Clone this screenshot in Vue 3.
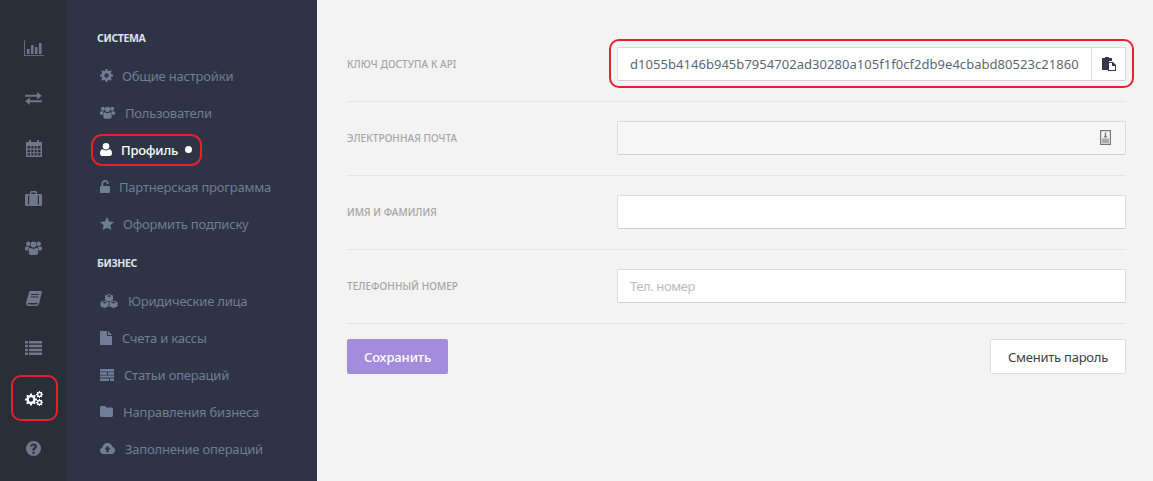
<script setup>
const railIcons = [
  { id: 'chart', w: 20, h: 16, active: false },
  { id: 'swap', w: 17, h: 13, active: false },
  { id: 'cal', w: 16, h: 17, active: false },
  { id: 'case', w: 17, h: 15, active: false },
  { id: 'users', w: 17, h: 14, active: false },
  { id: 'book', w: 16, h: 15, active: false },
  { id: 'list', w: 17, h: 14, active: false },
  { id: 'gears', w: 18, h: 15, active: true },
  { id: 'help', w: 15, h: 15, active: false },
]
const system = [
  { id: 'gear', label: 'Общие настройки', w: 13, h: 13, gap: 9 },
  { id: 'users', label: 'Пользователи', w: 15, h: 13, gap: 10 },
  { id: 'user', label: 'Профиль', w: 12, h: 13, gap: 9, active: true },
  { id: 'lock', label: 'Партнерская программа', w: 10, h: 13, gap: 9 },
  { id: 'star', label: 'Оформить подписку', w: 14, h: 13, gap: 9 },
]
const business = [
  { id: 'cubes', label: 'Юридические лица', w: 18, h: 14, gap: 10 },
  { id: 'file', label: 'Счета и кассы', w: 12, h: 14, gap: 10 },
  { id: 'lines', label: 'Статьи операций', w: 14, h: 12, gap: 10 },
  { id: 'folder', label: 'Направления бизнеса', w: 13, h: 11, gap: 10 },
  { id: 'cloud', label: 'Заполнение операций', w: 15, h: 11, gap: 10 },
]
const gearPath = (cx, cy, r, hole) => {
  const teeth = 8
  let d = ''
  for (let i = 0; i < teeth; i++) {
    const a = (i / teeth) * Math.PI * 2
    const s = Math.PI / teeth * 0.5
    const pts = [
      [r * 0.76, a - s * 1.25], [r, a - s * 0.75], [r, a + s * 0.75], [r * 0.76, a + s * 1.25],
    ]
    pts.forEach(([q, t], j) => {
      d += (i === 0 && j === 0 ? 'M' : 'L') + (cx + q * Math.cos(t)).toFixed(2) + ' ' + (cy + q * Math.sin(t)).toFixed(2)
    })
  }
  d += `Z M${cx - hole} ${cy}a${hole} ${hole} 0 1 0 ${hole * 2} 0a${hole} ${hole} 0 1 0 ${-hole * 2} 0Z`
  return d
}
const gears = {
  gear: gearPath(6.5, 6.5, 6.5, 2.2),
  big: gearPath(6, 8.5, 6, 2.2),
  s1: gearPath(14.5, 3.5, 3.5, 1.2),
  s2: gearPath(14.5, 11.5, 3.5, 1.2),
}
</script>

<template>
  <div class="app">
    <svg width="0" height="0" class="defs">
      <defs>
        <symbol id="chart" viewBox="0 0 20 16"><path d="M0 0h.8v15.200H20v.8H0z"/><path d="M3 9h2.500v5H3zM7 5h2.500v9H7zM11 7h2.500v7H11zM15 3h2.500v11H15z"/></symbol>
        <symbol id="swap" viewBox="0 0 18 14"><path d="M0 3h13V0l5 4-5 4V5H0z"/><path d="M18 9H5V6l-5 4 5 4v-3h13z"/></symbol>
        <symbol id="cal" viewBox="0 0 16 17"><path fill-rule="evenodd" d="M3 0h2v2h6V0h2v2h3v15H0V2h3zM1.500 6v2.500h2.700V6zm3.800 0v2.500h2.100V6zm3.300 0v2.500h2.100V6zm3.200 0v2.500h2.700V6zM1.500 9.700v2.500h2.700V9.700zm3.800 0v2.500h2.100V9.700zm3.300 0v2.500h2.100V9.700zm3.200 0v2.500h2.700V9.700zM1.500 13.300v2.200h2.700v-2.200zm3.800 0v2.200h2.100v-2.200zm3.300 0v2.200h2.100v-2.200zm3.200 0v2.200h2.700v-2.200z"/></symbol>
        <symbol id="case" viewBox="0 0 17 15"><path fill-rule="evenodd" d="M5 3V1.500C5 .7 5.700 0 6.500 0h4c.8 0 1.500.7 1.500 1.500V3h3.500c.8 0 1.500.7 1.500 1.500v9c0 .8-.7 1.500-1.500 1.500h-14C.7 15 0 14.300 0 13.500v-9C0 3.700.7 3 1.500 3zm1.500 0h4V1.500h-4zM3 4.500v9h1.200v-9zm9.800 0v9H14v-9z"/></symbol>
        <symbol id="users" viewBox="0 0 17 14"><circle cx="3.200" cy="2.800" r="2.200"/><circle cx="13.800" cy="2.800" r="2.200"/><circle cx="8.500" cy="3.400" r="3"/><path d="M0 6.500C0 5.800 1 5.500 2.500 5.500c.8 0 1.500.2 1.800.6-.6.900-.9 2-.9 3.400H1C.3 9.500 0 9 0 8.300zM17 6.500c0-.7-1-1-2.500-1-.8 0-1.500.2-1.800.6.600.9.900 2 .9 3.400H16c.7 0 1-.5 1-1.200z"/><path d="M5.500 6.800c.8.600 1.800 1 3 1s2.200-.4 3-1c1.100 0 1.700.9 1.700 3v2c0 1.300-.8 2.200-2 2.200H5.800c-1.200 0-2-.9-2-2.200v-2c0-2.100.6-3 1.700-3z"/></symbol>
        <symbol id="book" viewBox="0 0 16 15"><path fill-rule="evenodd" d="M3.500 0H15c.8 0 1 .6.8 1.300l-2.600 11c-.3 1.200-1.100 2.700-2.700 2.700H2.300C1 15 0 14 0 12.500c0-.5 0-1 .2-1.500zM5 3v1h8V3zM4.500 5.500v1h8v-1zM2 12.500c0 .7.500 1 1 1h7.500c.6 0 1.100-.4 1.300-1l.1-.5H3c-.6 0-1 0-1 .5z"/></symbol>
        <symbol id="list" viewBox="0 0 17 14"><path d="M0 0h3v2.500H0zM4 0h13v2.500H4zM0 3.800h3v2.500H0zM4 3.800h13v2.500H4zM0 7.700h3v2.500H0zM4 7.700h13v2.500H4zM0 11.500h3V14H0zM4 11.500h13V14H4z"/></symbol>
        <symbol id="gears" viewBox="0 0 18 15"><path fill-rule="evenodd" :d="gears.big"/><path fill-rule="evenodd" :d="gears.s1"/><path fill-rule="evenodd" :d="gears.s2"/></symbol>
        <symbol id="help" viewBox="0 0 15 15"><path fill-rule="evenodd" d="M7.500 0a7.500 7.500 0 1 1 0 15 7.500 7.500 0 0 1 0-15zM6.400 10.800v2h2.200v-2zM7.600 2.600C5.800 2.600 4.600 3.600 4.300 5.200l1.900.5c.2-.8.600-1.200 1.300-1.200.7 0 1.100.4 1.100.9 0 .5-.4.8-1 1.200-.8.500-1.200 1.200-1.200 2.200v.8h2.200v-.5c0-.5.200-.7.800-1.100.8-.6 1.500-1.300 1.500-2.600 0-1.700-1.300-2.800-3.300-2.800z"/></symbol>
        <symbol id="gear" viewBox="0 0 13 13"><path fill-rule="evenodd" :d="gears.gear"/></symbol>
        <symbol id="user" viewBox="0 0 12 13"><circle cx="6" cy="3.300" r="3.300"/><path d="M2.600 6.300C3.500 7 4.700 7.500 6 7.500s2.500-.5 3.400-1.200C11 6.400 12 8 12 10.500c0 1.500-.9 2.500-2.200 2.500H2.200C.9 13 0 12 0 10.500 0 8 1 6.400 2.600 6.300z"/></symbol>
        <symbol id="lock" viewBox="0 0 10 13"><path d="M0 6h1.500V3.500C1.500 1.500 3 0 5 0s3.500 1.500 3.500 3.500V4H6.800v-.5C6.800 2.500 6 1.800 5 1.800S3.200 2.500 3.200 3.500V6H9c.6 0 1 .4 1 1v5c0 .6-.4 1-1 1H1c-.6 0-1-.4-1-1V7c0-.6.400-1 1-1z"/></symbol>
        <symbol id="star" viewBox="0 0 14 13"><path d="M7 0l2.100 4.400 4.900.6-3.600 3.300.9 4.700L7 10.700 2.700 13l.9-4.700L0 5l4.900-.6z"/></symbol>
        <symbol id="cubes" viewBox="0 0 18 14"><path fill-rule="evenodd" d="M9 0l4 1.500V6l-4 1.500L5 6V1.500zM6.500 2l2.500.9 2.500-.9L9 1.100zM4.500 6.500l4 1.500v4.500L4.500 14 .5 12.500V8zM13.500 6.500l4 1.500v4.500l-4 1.500-4-1.500V8zM2 8.500l2.500.9L7 8.500l-2.500-.9zM11 8.500l2.500.9 2.500-.9-2.500-.9z"/></symbol>
        <symbol id="file" viewBox="0 0 12 14"><path d="M0 0h7v5h5v9H0zM8 0l4 4H8z"/></symbol>
        <symbol id="lines" viewBox="0 0 14 12"><path d="M0 0h14v2.500H0zM0 3.300h7v2.500H0zM8 3.300h6v2.500H8zM0 6.600h14v2H0zM0 9.500h9V12H0zM10 9.500h4V12h-4z"/></symbol>
        <symbol id="folder" viewBox="0 0 13 11"><path d="M1.500 0h3C5.300 0 6 .7 6 1.500h5.500c.8 0 1.500.7 1.500 1.500v6.500c0 .8-.7 1.500-1.500 1.500h-10C.7 11 0 10.300 0 9.500v-8C0 .7.700 0 1.500 0z"/></symbol>
        <symbol id="cloud" viewBox="0 0 15 11"><path fill-rule="evenodd" d="M3.500 11C1.500 11 0 9.600 0 7.700c0-1.500 1-2.800 2.400-3.100C2.700 2 4.900 0 7.500 0c2.300 0 4.300 1.500 4.900 3.700 1.600.3 2.600 1.800 2.600 3.500 0 2.100-1.600 3.800-3.500 3.800zM7.500 3L4.300 6.200h2v3h2.400v-3h2z"/></symbol>
      </defs>
    </svg>

    <nav class="rail">
      <div v-for="icon in railIcons" :key="icon.id" class="rail-item" :class="{ 'rail-active': icon.active }">
        <svg :width="icon.w" :height="icon.h" class="icon"><use :href="'#' + icon.id" /></svg>
      </div>
    </nav>

    <aside class="side">
      <h4 class="side-title">СИСТЕМА</h4>
      <a v-for="item in system" :key="item.id" class="side-item" :class="{ on: item.active }">
        <svg :width="item.w" :height="item.h" :style="{ marginRight: item.gap + 'px' }" class="icon"><use :href="'#' + item.id" /></svg>
        <span>{{ item.label }}</span>
        <i v-if="item.active" class="dot"></i>
      </a>
      <h4 class="side-title second">БИЗНЕС</h4>
      <a v-for="item in business" :key="item.id" class="side-item">
        <svg :width="item.w" :height="item.h" :style="{ marginRight: item.gap + 'px' }" class="icon"><use :href="'#' + item.id" /></svg>
        <span>{{ item.label }}</span>
      </a>
    </aside>

    <main class="main">
      <div class="row">
        <label class="lbl">КЛЮЧ ДОСТУПА К API</label>
        <div class="field key">
          <span class="key-text">d1055b4146b945b7954702ad30280a105f1f0cf2db9e4cbabd80523c21860</span>
          <button class="copy" type="button">
            <svg width="14" height="14" viewBox="0 0 14 14"><path d="M0 1h3V0h4v1h3v3H7v9H0z" fill="#3a3646"/><path fill-rule="evenodd" d="M6 5h5l3 3v6H6zm1 1v7h6V9h-3V6z" fill="#3a3646"/></svg>
          </button>
        </div>
      </div>
      <div class="row">
        <label class="lbl">ЭЛЕКТРОННАЯ ПОЧТА</label>
        <div class="field disabled">
          <svg width="11" height="15" viewBox="0 0 11 15"><path fill-rule="evenodd" d="M0 0h11v15H0zm1.200 1.200v12.600h8.600V1.200z" fill="#777"/><path d="M4.800 2.500h1.400v3l1.300 2H3.500l1.300-2z" fill="#777"/><path d="M2 8.500h7v4.500H2z" fill="#aaa"/></svg>
        </div>
      </div>
      <div class="row">
        <label class="lbl">ИМЯ И ФАМИЛИЯ</label>
        <div class="field"></div>
      </div>
      <div class="row">
        <label class="lbl">ТЕЛЕФОННЫЙ НОМЕР</label>
        <div class="field"><span class="ph">Тел. номер</span></div>
      </div>
      <div class="actions">
        <button class="save" type="button">Сохранить</button>
        <button class="change" type="button">Сменить пароль</button>
      </div>
    </main>
  </div>
</template>

<style scoped>
.app {
  display: flex;
  width: 1153px;
  height: 481px;
  overflow: hidden;
  font-family: "Noto Sans", "Liberation Sans", sans-serif;
}
.defs { position: absolute; }
.icon { fill: currentColor; flex: none; display: block; }
.rail {
  width: 67px;
  flex: none;
  background: #2a2e39;
  color: #6f7889;
  padding: 23px 0 0;
  box-sizing: border-box;
}
.rail-item {
  height: 50px;
  display: flex;
  align-items: center;
  justify-content: center;
  position: relative;
  box-sizing: border-box;
}
.rail-active { color: #fff; }
.rail-active::after {
  content: "";
  position: absolute;
  left: 11px;
  top: 2px;
  width: 47px;
  height: 46px;
  box-sizing: border-box;
  border: 2px solid #e8202e;
  border-radius: 10px;
}
.side {
  width: 250px;
  flex: none;
  background: #2e3446;
  padding: 32px 0 0 30px;
  box-sizing: border-box;
  color: #6f7d96;
}
.side-title {
  margin: 0 0 15px;
  font-size: 10.500px;
  line-height: 12px;
  font-weight: 700;
  color: #dfe1e6;
  letter-spacing: -0.35px;
}
.side-title.second { margin: 15px 0 13px; }
.side-item {
  display: flex;
  align-items: center;
  height: 37px;
  font-size: 13px;
  position: relative;
  letter-spacing: -0.2px;
  margin-left: 3px;
}
.side-item:first-of-type { margin-top: -2px; }
.side-item.on { color: #fff; font-weight: 500; letter-spacing: -0.25px; }
.side-item.on::after {
  content: "";
  position: absolute;
  left: -9px;
  top: 3px;
  width: 111px;
  height: 32px;
  box-sizing: border-box;
  border: 2px solid #e8202e;
  border-radius: 11px;
}
.dot {
  width: 7px;
  height: 7px;
  border-radius: 50%;
  background: #fff;
  margin-left: 7px;
}
.main {
  flex: 1;
  min-width: 0;
  background: #f3f3f3;
  padding: 28px 27px 0 30px;
  box-sizing: border-box;
}
.row {
  display: flex;
  align-items: center;
  height: 74px;
  border-bottom: 1px solid #e4e4e4;
  box-sizing: border-box;
}
.lbl {
  width: 270px;
  flex: none;
  font-size: 10px;
  font-weight: 500;
  color: #a5a5a5;
  letter-spacing: 0.07px;
  margin-top: -2px;
}
.field {
  flex: 1;
  min-width: 0;
  height: 34px;
  margin-top: -2px;
  box-sizing: border-box;
  background: #fff;
  border: 1px solid #dcdcdc;
  border-bottom-color: #cfcfcf;
  border-radius: 2px;
  display: flex;
  align-items: center;
  justify-content: flex-end;
  position: relative;
}
.field.disabled { background: #f6f6f6; padding-right: 14px; }
.key { justify-content: space-between; }
.key::after {
  content: "";
  position: absolute;
  left: -9px;
  top: -9px;
  right: -9px;
  bottom: -8px;
  border: 2px solid #e8202e;
  border-radius: 10px;
  pointer-events: none;
}
.key-text {
  font-size: 13px;
  letter-spacing: 0.04px;
  color: #5b6676;
  padding-left: 12px;
  white-space: nowrap;
}
.copy {
  width: 34px;
  height: 32px;
  flex: none;
  background: #fff;
  border: 0;
  border-left: 1px solid #dcdcdc;
  padding: 0 0 0 1px;
  display: flex;
  align-items: center;
  justify-content: center;
}
.ph {
  margin-right: auto;
  padding: 1px 0 0 12px;
  font-size: 13px;
  color: #bbb;
  letter-spacing: -0.4px;
}
.actions {
  display: flex;
  justify-content: space-between;
  margin-top: 15px;
}
.save, .change {
  height: 35px;
  border-radius: 2px;
  font-family: inherit;
  font-size: 13px;
  padding: 0;
}
.save {
  width: 101px;
  background: #a48cdd;
  border: 0;
  color: #fff;
  font-weight: 500;
  letter-spacing: -0.1px;
}
.change {
  width: 136px;
  background: #fff;
  border: 1px solid #dcdcdc;
  color: #3b3f49;
  letter-spacing: -0.25px;
}
</style>
